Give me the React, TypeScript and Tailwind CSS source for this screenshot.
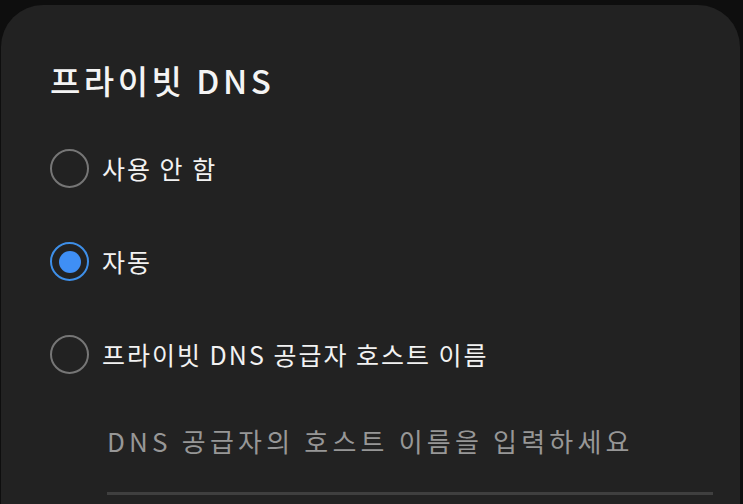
import { useState } from 'react';

const options = ['사용 안 함', '자동', '프라이빗 DNS 공급자 호스트 이름'];

function Radio({ checked }: { checked: boolean }) {
  return checked ? (
    <span className="w-[39px] h-[39px] rounded-full border-[2.5px] border-[#3e8fe8] flex items-center justify-center shrink-0">
      <span className="w-[22px] h-[22px] rounded-full bg-[#3f8ff5]" />
    </span>
  ) : (
    <span className="w-[39px] h-[39px] rounded-full border-2 border-[#767676] shrink-0" />
  );
}

export default function App() {
  const [sel, setSel] = useState(1);

  return (
    <div
      className="h-[504px] w-[743px] overflow-hidden bg-[#0e0e0e] pt-[5px] pl-[1px] pr-[3px]"
      style={{ fontFamily: '"Noto Sans CJK KR", "Noto Sans", sans-serif' }}
    >
      <div className="h-full rounded-t-[42px] bg-[#222222] pl-[49px] pr-[27px] pt-[55px]">
        <h1 className="text-[33px] leading-[40px] font-medium text-[#f4f4f4] tracking-[3.5px] mb-[22px]">
          프라이빗 DNS
        </h1>

        {options.map((o, i) => (
          <button
            key={o}
            onClick={() => setSel(i)}
            className="w-full h-[93px] flex items-center gap-[13px] text-left"
          >
            <Radio checked={sel === i} />
            <span className="text-[25px] text-[#f2f2f2] tracking-[2px]">{o}</span>
          </button>
        ))}

        <div className="ml-[57px] mt-[16px]">
          <input
            placeholder="DNS 공급자의 호스트 이름을 입력하세요"
            className="w-full bg-transparent text-[26px] h-[50px] tracking-[4.2px] text-[#ddd] placeholder:text-[#979797] outline-none pb-[4px]"
          />
          <div className="h-[3px] bg-[#3f3f3f] mt-[25px]" />
        </div>
      </div>
    </div>
  );
}
